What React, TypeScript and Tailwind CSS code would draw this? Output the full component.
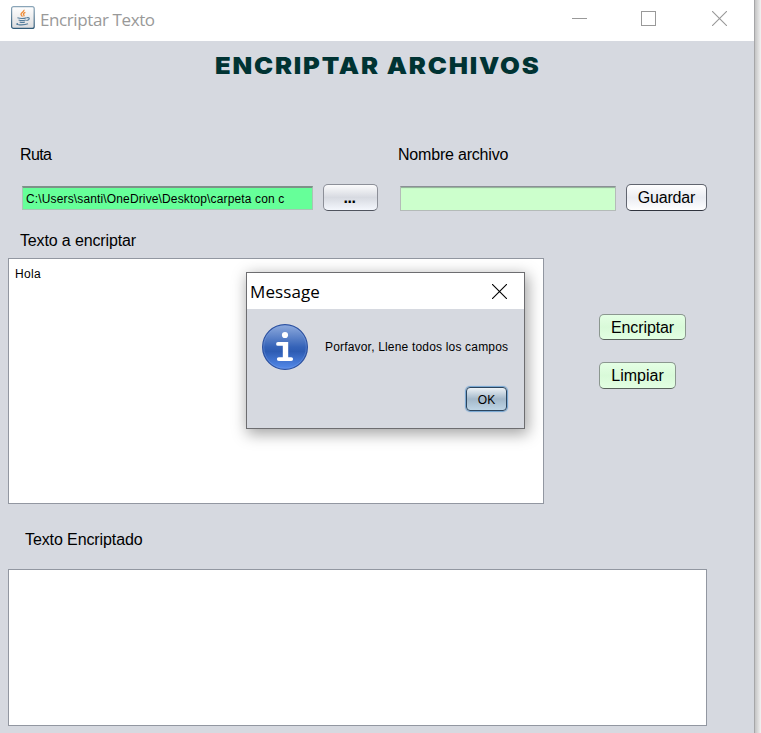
import type { ReactNode } from "react";

function JavaIcon() {
  return (
    <svg width="26" height="26" viewBox="0 0 26 26" className="shrink-0">
      <defs>
        <linearGradient id="frame" x1="0" y1="0" x2="0" y2="1">
          <stop offset="0" stopColor="#8aa5b8" />
          <stop offset="1" stopColor="#315b79" />
        </linearGradient>
        <linearGradient id="face" x1="0" y1="0" x2="0" y2="1">
          <stop offset="0" stopColor="#ffffff" />
          <stop offset="1" stopColor="#dcdcde" />
        </linearGradient>
      </defs>
      <rect x="1.6" y="1.6" width="22.6" height="21.8" rx="2" fill="url(#face)" stroke="url(#frame)" strokeWidth="1.2" />
      <path d="M14 4.8c.8 2-4.2 3.2-2.8 5.2.4.6 1 1 1.2 1.6M15.4 7.4c-2.2.9-2.4 1.8-1.5 2.6.4.5.1 1-.3 1.4" fill="none" stroke="#ee8a35" strokeWidth="1.3" />
      <path d="M7.4 12.8c2.8.9 7 .7 9.2-.1M8.6 14.9c2.2.8 5 .7 7.2 0M9.6 16.9c1.7.6 3.7.6 5.3 0M16.8 12.8c3.4-.9 3.3 2.2-.5 2.7M8 18.4c-5 1.6 6 2.2 10 .4" fill="none" stroke="#547d9c" strokeWidth="1.1" />
    </svg>
  );
}

function InfoIcon() {
  return (
    <svg width="46" height="46" viewBox="0 0 46 46" className="shrink-0">
      <defs>
        <linearGradient id="disc" x1="0" y1="0" x2="0" y2="1">
          <stop offset="0" stopColor="#8fabdd" />
          <stop offset="0.5" stopColor="#3563b8" />
          <stop offset="0.6" stopColor="#2d5cb3" />
          <stop offset="1" stopColor="#558bec" />
        </linearGradient>
      </defs>
      <circle cx="23" cy="23" r="22.4" fill="url(#disc)" stroke="#2c51a0" strokeWidth="1.2" />
      <circle cx="23" cy="23" r="21.3" fill="none" stroke="#7fa4e4" strokeWidth="0.7" opacity="0.55" />
      <circle cx="23" cy="11" r="3.1" fill="#fff" />
      <path d="M16 18h10.2v15.2h3a1.9 1.9 0 0 1 0 3.8H16.8a1.9 1.9 0 0 1 0-3.8h4V21.8H16a1.9 1.9 0 0 1 0-3.8z" fill="#fff" />
    </svg>
  );
}

function CloseMark() {
  return (
    <svg width="15" height="15" viewBox="0 0 15 15" className="shrink-0">
      <path d="M0 0l15 15M15 0l-15 15" stroke="currentColor" strokeWidth="1.1" />
    </svg>
  );
}

function Label({ className, children }: { className: string; children: ReactNode }) {
  return <span className={`whitespace-nowrap text-[16px] leading-[18px] ${className}`}>{children}</span>;
}

function Button({ className, children }: { className: string; children: ReactNode }) {
  return (
    <button
      className={`flex shrink-0 items-center justify-center whitespace-nowrap rounded-[5px] border text-[16px] leading-[18px] ${className}`}
    >
      {children}
    </button>
  );
}

export default function App() {
  return (
    <div className="relative h-[733px] w-[761px] overflow-hidden bg-linear-to-r from-[#c4c4c4] from-[755px] to-[#f2f2f2] font-['Liberation_Sans',Arial,sans-serif] text-black">
      <main className="flex h-full w-[755px] flex-col border-r border-[#a6a6a8] bg-[#d6d9e0]">
        <header className="flex h-[41px] shrink-0 items-start bg-white pl-[10px] pr-[27px] text-[#999999]">
          <div className="flex pt-[5px]">
            <JavaIcon />
          </div>
          <span className="ml-[4px] mt-[7px] whitespace-nowrap font-['Open_Sans','Noto_Sans',sans-serif] text-[17px] leading-[25px] tracking-[-0.4px]">
            Encriptar Texto
          </span>
          <div className="ml-auto mt-[11px] flex h-[15px] items-center">
            <span className="mr-[54px] h-px w-[15px] bg-[#999999]" />
            <span className="mr-[56px] h-[15px] w-[15px] shrink-0 border border-[#999999]" />
            <CloseMark />
          </div>
        </header>

        <h1 className="ml-[215px] mt-[10px] h-[30px] shrink-0 origin-left scale-x-[1.09] whitespace-nowrap font-['Inter',sans-serif] text-[23.5px] font-black leading-[30px] tracking-[1.65px] text-[#003333]">
          ENCRIPTAR ARCHIVOS
        </h1>

        <div className="mt-[65px] flex h-[18px] shrink-0 pl-[20px]">
          <Label className="w-[378px] tracking-[-0.6px]">Ruta</Label>
          <Label className="tracking-[-0.2px]">Nombre archivo</Label>
        </div>

        <div className="mt-[20px] flex h-[28px] shrink-0 items-start pl-[22px]">
          <div className="mt-[2px] flex h-[24px] w-[291px] shrink-0 items-center border border-t-2 border-[#a9c4b5] border-t-[#7d9188] bg-[#66ff99] pl-[3px] text-[12px]">
            <span className="whitespace-nowrap tracking-[0.14px]">C:\Users\santi\OneDrive\Desktop\carpeta con c</span>
          </div>
          <Button className="ml-[10px] h-[27px] w-[55px] border-[#8c8f98] border-b-[#50545e] bg-linear-to-b from-[#fbfbfc] via-[#d7dae1] to-[#f4f7fd] pr-[2px] pt-px font-bold tracking-[-0.4px]">
            ...
          </Button>
          <div className="ml-[22px] mt-[2px] h-[25px] w-[216px] shrink-0 border border-[#b4bbb8] border-t-[#8b8f96] bg-[#ccffcc] shadow-[inset_0_2px_1px_-1px_#8fae95]" />
          <Button className="ml-[10px] h-[27px] w-[81px] border-[#61656f] border-b-[#30343e] bg-linear-to-b from-white via-[#eaecf2] to-white tracking-[-0.2px]">
            Guardar
          </Button>
        </div>

        <Label className="ml-[20px] mt-[20px] tracking-[-0.14px]">Texto a encriptar</Label>

        <div className="mt-[8px] flex h-[246px] shrink-0 pl-[8px]">
          <div className="w-[536px] shrink-0 border border-[#9297a1] bg-white pl-[6px] pt-[7px] text-[12px] leading-[16px] tracking-[0.3px]">
            Hola
          </div>
          <div className="ml-[55px] flex flex-col items-start gap-[22px] pt-[56px]">
            <Button className="h-[26px] w-[87px] border-[#8b978f] border-b-[#59635c] bg-linear-to-b from-[#e4ffe4] via-[#d9fad9] to-[#e2ffe2] pt-px tracking-[-0.1px]">
              Encriptar
            </Button>
            <Button className="h-[27px] w-[77px] border-[#8b978f] border-b-[#59635c] bg-linear-to-b from-[#e4ffe4] via-[#d9fad9] to-[#e2ffe2]">
              Limpiar
            </Button>
          </div>
        </div>

        <Label className="ml-[25px] mt-[27px] tracking-[-0.1px]">Texto Encriptado</Label>
        <div className="ml-[8px] mt-[20px] h-[157px] w-[699px] shrink-0 border border-[#9297a1] bg-white" />
      </main>

      <section className="absolute left-[246px] top-[272px] flex h-[157px] w-[279px] flex-col border border-[#6d6d70] bg-[#d6d9e0] shadow-[2px_4px_14px_1px_rgba(0,0,0,0.36)]">
        <header className="flex h-[36px] shrink-0 items-center justify-between bg-white pl-[3px] pr-[17px]">
          <span className="mt-[2px] font-['Open_Sans','Noto_Sans',sans-serif] text-[17px] leading-[24px] tracking-[0.1px]">
            Message
          </span>
          <CloseMark />
        </header>
        <div className="mt-[15px] flex h-[46px] items-center pl-[15px]">
          <InfoIcon />
          <span className="ml-[17px] whitespace-nowrap text-[12px] tracking-[0.18px]">Porfavor, Llene todos los campos</span>
        </div>
        <button className="ml-[219px] mt-[17px] h-[24px] w-[41px] rounded-[4px] border border-[#2b455f] bg-linear-to-b from-[#edf2f6] via-[#a3b8ca] to-[#bed5e5] pt-px text-[12px] leading-[22px] shadow-[0_0_1px_1px_#73a4d1]">
          OK
        </button>
      </section>
    </div>
  );
}
